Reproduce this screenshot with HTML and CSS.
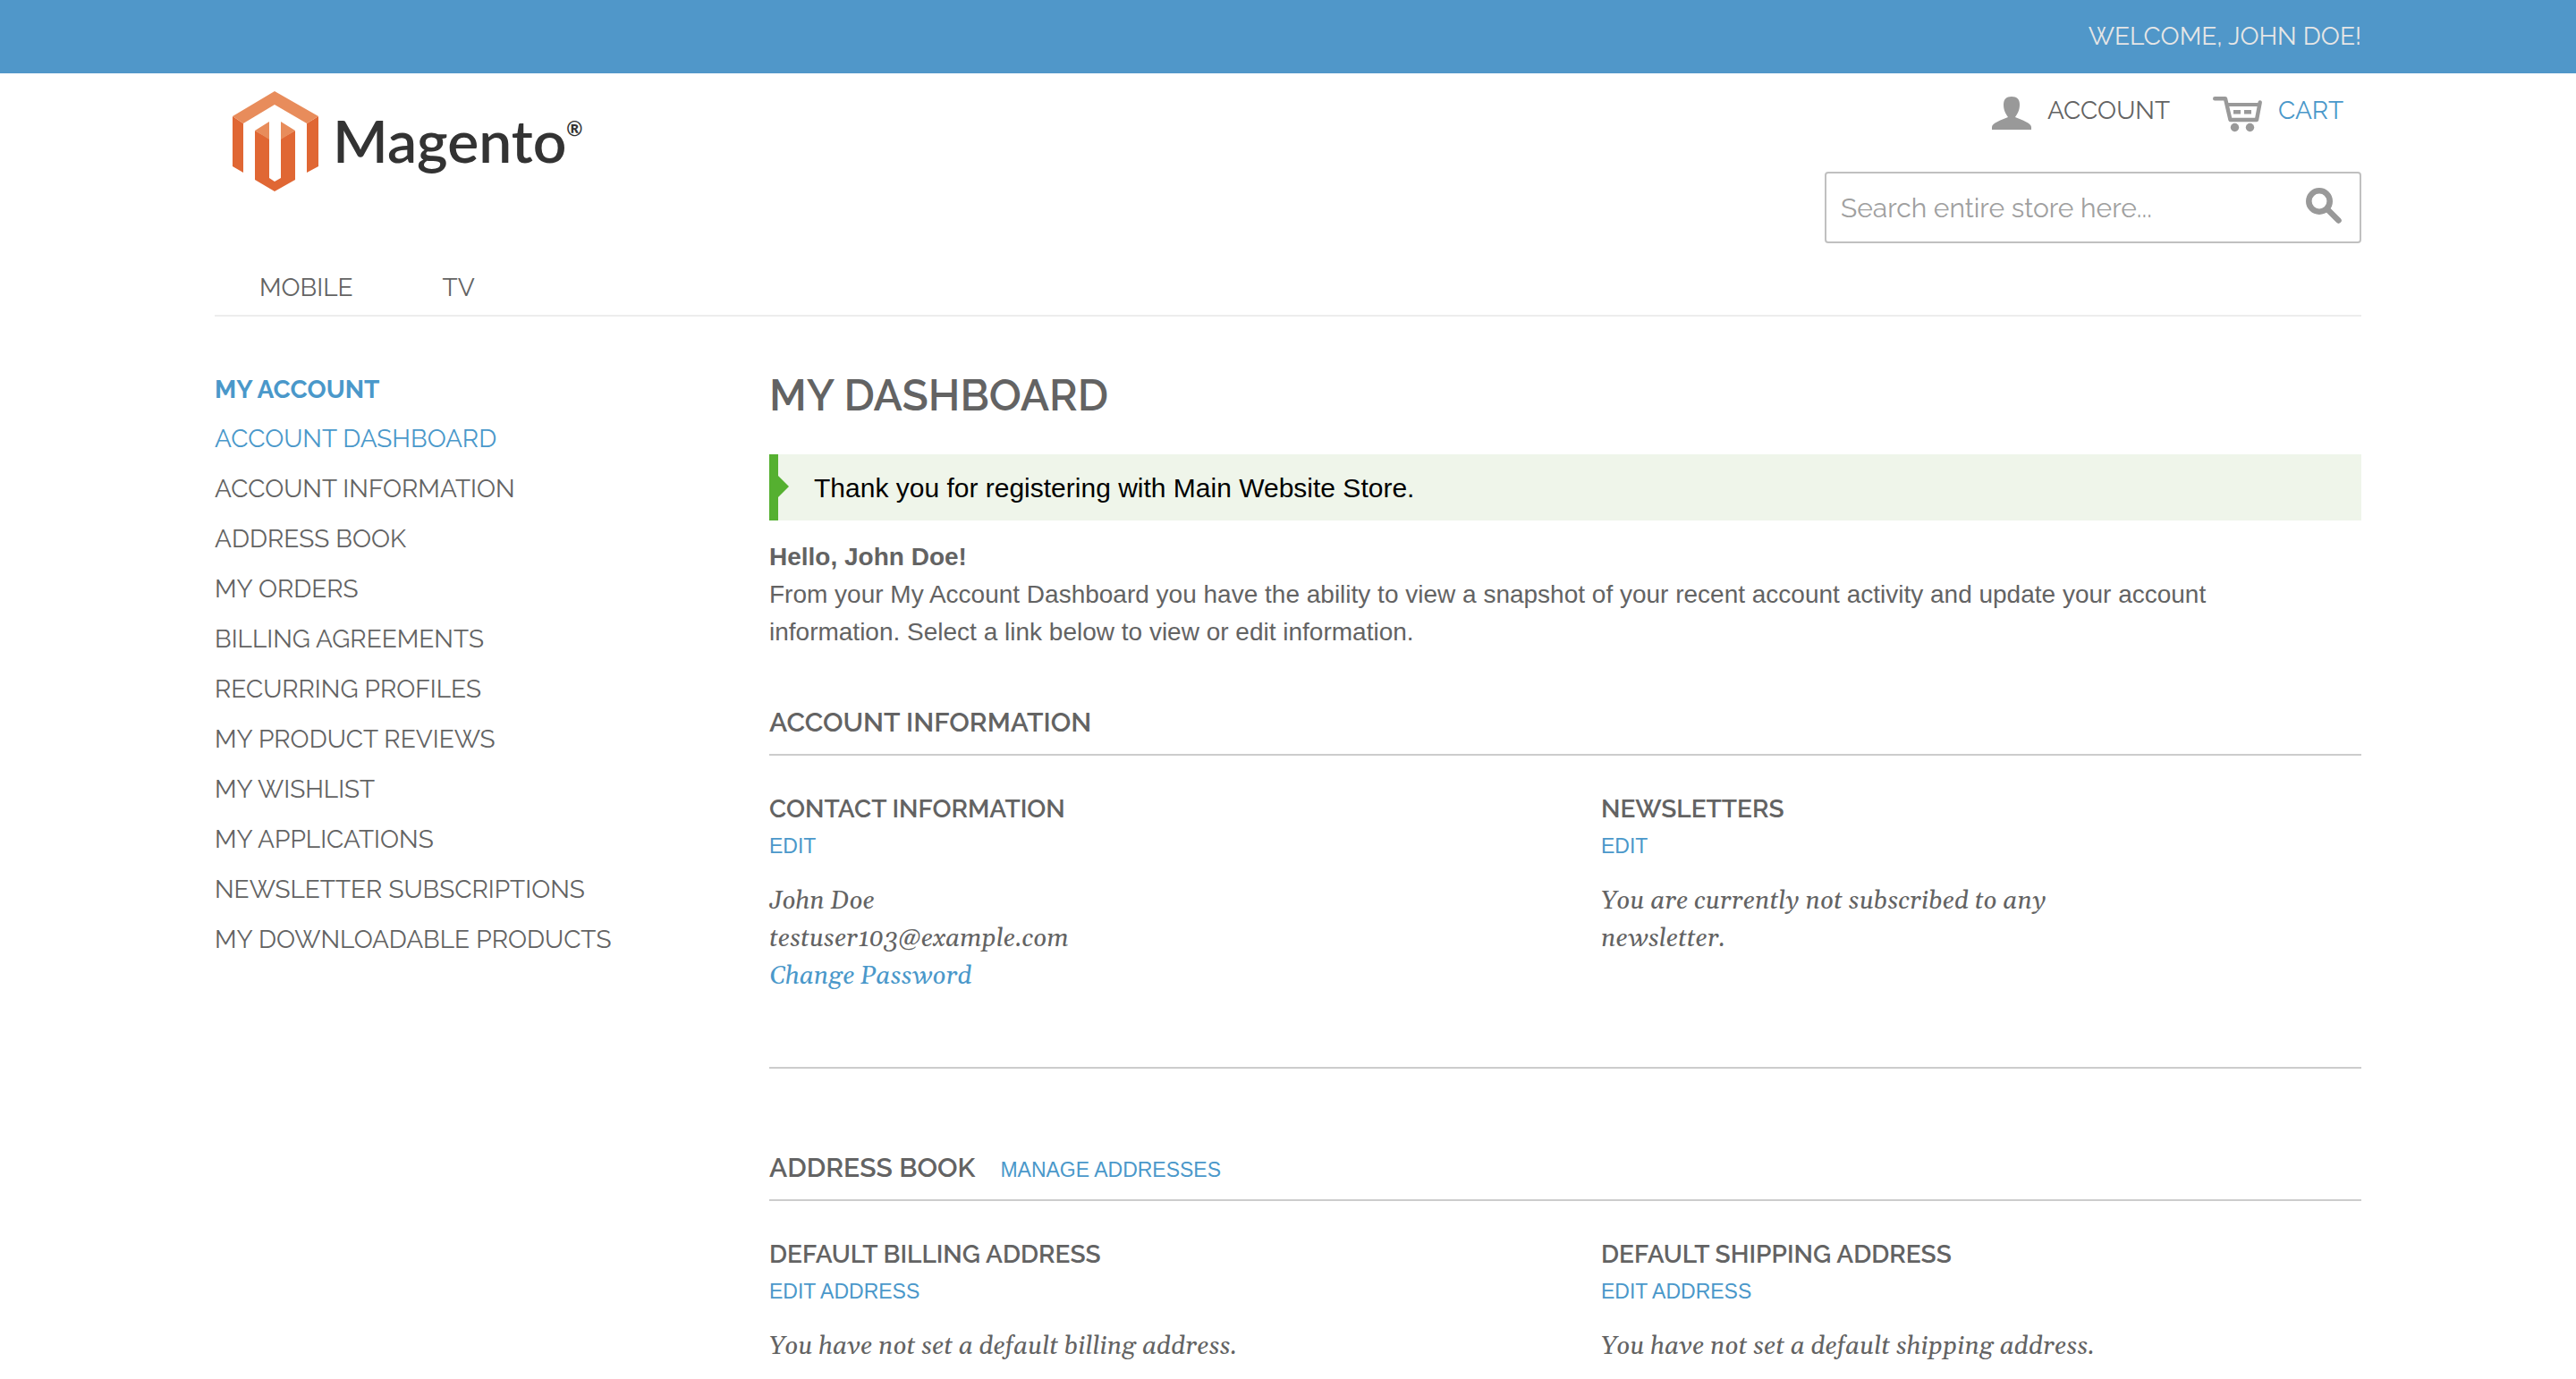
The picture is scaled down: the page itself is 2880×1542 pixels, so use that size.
FILE: index.html
```html
<!DOCTYPE html>
<html lang="en">
<head>
<meta charset="utf-8">
<title>My Account</title>
<link rel="stylesheet" href="styles.css">
</head>
<body>
<div class="topbar"><p class="container welcome">Welcome, John Doe!</p></div>

<header class="container header">
  <a class="logo" href="#" aria-label="Magento home">
    <svg class="logo-mark" viewBox="0 0 96 112" aria-hidden="true">
      <path fill="#e06734" d="M0 28 12 36V91L0 84ZM96 28 83 36V91L96 84ZM25 44 41 53V97L47 101 54 97V53L70 44V99L47 112 25 99Z"/>
      <path fill="#e88c5b" d="M47 0 96 28 83 36 47 15 12 36 0 28ZM41 34V54L25 44ZM54 34 70 44 54 54Z"/>
    </svg>
    <span class="logo-word">Magento</span><span class="logo-reg">®</span>
  </a>
  <div class="tools">
    <div class="quick-links">
      <a class="quick-link" href="#">
        <svg class="icon-account" viewBox="0 0 44 38" aria-hidden="true"><path fill="#999" d="M22 0C28 0 31 3 31 9C31 16 28 20 26 23C34 26 44 30 44 34V37H0V34C0 30 10 26 18 23C16 20 13 16 13 9C13 3 16 0 22 0Z"/></svg>
        Account
      </a>
      <a class="quick-link cart" href="#">
        <svg class="icon-cart" viewBox="0 0 55 40" aria-hidden="true"><path fill="none" stroke="#999" stroke-width="4.4" stroke-linecap="round" stroke-linejoin="round" d="M2.2 2.2H14L19.500 26H49L52.700 6.500"/><path fill="#999" d="M15 7H54V11H15ZM23 15H31V19.500H23ZM35 15H43V19.500H35Z"/><circle cx="24.500" cy="34.500" r="4.700" fill="#999"/><circle cx="41.500" cy="34.500" r="4.700" fill="#999"/></svg>
        Cart
      </a>
    </div>
    <form class="search">
      <input class="search-input" type="search" aria-label="Search" placeholder="Search entire store here...">
      <button class="search-button" type="submit" aria-label="Search">
        <svg class="icon-search" viewBox="0 0 40 40" aria-hidden="true"><circle cx="15" cy="15" r="11.700" fill="none" stroke="#999" stroke-width="6.600"/><path stroke="#999" stroke-width="6.600" stroke-linecap="round" d="M24 24 36.500 36.500"/></svg>
      </button>
    </form>
  </div>
</header>

<nav class="container main-nav" aria-label="Main">
  <a href="#">Mobile</a>
  <a href="#">TV</a>
</nav>

<div class="container page">
  <nav class="sidebar" aria-label="Account">
    <h2 class="sidebar-title">My Account</h2>
    <ul class="sidebar-list">
      <li><a class="current" href="#">Account Dashboard</a></li>
      <li><a href="#">Account Information</a></li>
      <li><a href="#">Address Book</a></li>
      <li><a href="#">My Orders</a></li>
      <li><a href="#">Billing Agreements</a></li>
      <li><a href="#">Recurring Profiles</a></li>
      <li><a href="#">My Product Reviews</a></li>
      <li><a href="#">My Wishlist</a></li>
      <li><a href="#">My Applications</a></li>
      <li><a href="#">Newsletter Subscriptions</a></li>
      <li><a href="#">My Downloadable Products</a></li>
    </ul>
  </nav>

  <main class="content">
    <h1 class="page-title">My Dashboard</h1>
    <p class="message" role="status">Thank you for registering with Main Website Store.</p>
    <div class="intro">
      <p><strong>Hello, John Doe!</strong></p>
      <p>From your My Account Dashboard you have the ability to view a snapshot of your recent account activity and update your account information. Select a link below to view or edit information.</p>
    </div>

    <section class="section section-ruled">
      <div class="section-head"><h2>Account Information</h2></div>
      <div class="columns">
        <div class="box">
          <h3>Contact Information</h3>
          <a class="action" href="#">Edit</a>
          <p class="details">John Doe<br>testuser103@example.com<br><a href="#">Change Password</a></p>
        </div>
        <div class="box">
          <h3>Newsletters</h3>
          <a class="action" href="#">Edit</a>
          <p class="details">You are currently not subscribed to any newsletter.</p>
        </div>
      </div>
    </section>

    <section class="section">
      <div class="section-head"><h2>Address Book</h2><a class="action" href="#">Manage Addresses</a></div>
      <div class="columns">
        <div class="box">
          <h3>Default Billing Address</h3>
          <a class="action" href="#">Edit Address</a>
          <p class="details">You have not set a default billing address.</p>
        </div>
        <div class="box">
          <h3>Default Shipping Address</h3>
          <a class="action" href="#">Edit Address</a>
          <p class="details">You have not set a default shipping address.</p>
        </div>
      </div>
    </section>
  </main>
</div>
</body>
</html>
```
FILE: styles.css
```css
* {
  box-sizing: border-box;
}

body,
h1,
h2,
h3,
p,
ul {
  margin: 0;
  padding: 0;
}

body {
  background: #fff;
  color: #636363;
  font: 28px/42px "Liberation Sans", sans-serif;
}

a {
  color: #4a98ca;
  text-decoration: none;
}

.container {
  width: 100%;
  max-width: 2400px;
  margin: 0 auto;
}

.topbar {
  background: #5097c9;
  padding: 20px 0;
}

.welcome {
  color: #e6e6e6;
  font-family: Raleway, Lato, sans-serif;
  text-align: right;
  text-transform: uppercase;
}

.header {
  display: flex;
  justify-content: space-between;
  align-items: flex-start;
  padding: 20px 0 0 20px;
}

.logo {
  display: flex;
  align-items: flex-start;
  color: #333;
  font-family: Lato, sans-serif;
}

.logo-mark {
  width: 96px;
  height: 112px;
  margin-right: 16px;
}

.logo-word {
  font-size: 66px;
  font-weight: 600;
  line-height: 110px;
}

.logo-reg {
  font-size: 22px;
  font-weight: 700;
  line-height: 84px;
}

.tools {
  width: 600px;
}

.quick-links {
  display: flex;
  justify-content: flex-end;
  gap: 48px;
  padding-right: 20px;
}

.quick-link {
  display: flex;
  gap: 18px;
  color: #636363;
  font-family: Raleway, Lato, sans-serif;
  line-height: 44px;
  text-transform: uppercase;
}

.quick-link svg {
  margin-top: 6px;
}

.cart {
  color: #4a98ca;
}

.icon-account {
  width: 44px;
  height: 38px;
}

.icon-cart {
  width: 55px;
  height: 40px;
}

.search {
  display: flex;
  height: 80px;
  margin-top: 44px;
  border: 2px solid #c0c0c0;
  border-radius: 4px;
}

.search-input {
  flex: 1;
  min-width: 0;
  padding: 2px 16px 0;
  border: 0;
  outline: 0;
  background: none;
  font: 30px/42px Raleway, Lato, sans-serif;
}

.search-input::placeholder {
  color: #a0a0a0;
  opacity: 1;
}

.search-button {
  padding: 0 20px 4px;
  border: 0;
  background: none;
}

.icon-search {
  display: block;
  width: 40px;
  height: 40px;
}

.main-nav {
  display: flex;
  gap: 100px;
  padding: 29px 50px 9px;
  border-bottom: 2px solid #ededed;
}

.main-nav a {
  color: #636363;
  font-family: Raleway, Lato, sans-serif;
  text-transform: uppercase;
}

.page {
  display: grid;
  grid-template-columns: 620px 1fr;
  padding-top: 54px;
}

.sidebar {
  font-family: Raleway, Lato, sans-serif;
  line-height: 56px;
  text-transform: uppercase;
}

.sidebar-title {
  color: #4a98ca;
  font-size: 28px;
  font-weight: 700;
  line-height: 55px;
}

.sidebar-list {
  list-style: none;
}

.sidebar-list a {
  color: #636363;
}

.sidebar-list .current {
  color: #4a98ca;
}

.page-title {
  font: 600 48px/68px Raleway, Lato, sans-serif;
  text-transform: uppercase;
}

.message {
  position: relative;
  margin: 32px 0 20px;
  padding: 17px 40px 15px;
  border-left: 10px solid #55b030;
  background: #eff5ea;
  color: #000;
  font-size: 30px;
}

.message::before {
  content: "";
  position: absolute;
  top: 24px;
  left: 0;
  border: 12px solid transparent;
  border-left-color: #55b030;
  border-right: 0;
}

.intro {
  padding-right: 40px;
}

.section {
  padding-top: 59px;
}

.section + .section {
  padding-top: 90px;
}

.section-ruled {
  padding-bottom: 80px;
  border-bottom: 2px solid #ccc;
}

.section-head {
  display: flex;
  align-items: baseline;
  gap: 28px;
  padding-bottom: 14px;
  border-bottom: 2px solid #ccc;
}

.section-head h2 {
  font: 600 30px/42px Raleway, Lato, sans-serif;
  text-transform: uppercase;
}

.columns {
  display: grid;
  grid-template-columns: 1fr 1fr;
  column-gap: 80px;
  padding-top: 39px;
}

.box h3 {
  font: 600 28px/42px Raleway, Lato, sans-serif;
  text-transform: uppercase;
}

.action {
  display: block;
  font-size: 23px;
  line-height: 40px;
  text-transform: uppercase;
}

.section-head .action {
  line-height: 32px;
}

.details {
  max-width: 600px;
  padding-top: 21px;
  font: italic 28px/42px Gelasio, Georgia, "Liberation Serif", serif;
}
```
